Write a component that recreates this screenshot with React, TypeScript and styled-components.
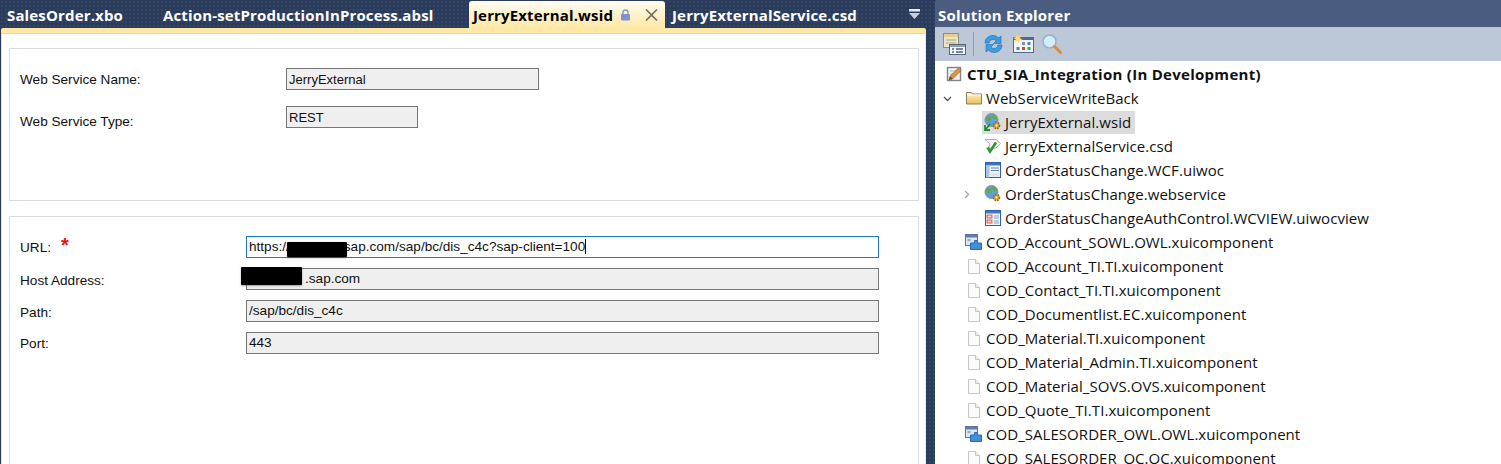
import React from "react";
import styled, { createGlobalStyle } from "styled-components";

const GlobalStyle = createGlobalStyle`
  html, body {
    margin: 0;
    padding: 0;
    background: #2b3c5a;
  }
`;

const FolderIcon = () => (
  <svg width="16" height="14" viewBox="0 0 16 14">
    <defs>
      <linearGradient id="folderFill" x1="0" y1="0" x2="0" y2="1">
        <stop offset="0" stopColor="#fff6cf" />
        <stop offset="1" stopColor="#e8bd55" />
      </linearGradient>
    </defs>
    <path d="M0.5 1.5h5l1 1.5h9v10h-15z" fill="url(#folderFill)" stroke="#85806c" />
    <path d="M1 4h14" stroke="#fffbe8" />
  </svg>
);

const PageIcon = () => (
  <svg width="12" height="15" viewBox="0 0 12 15">
    <path d="M0.5 0.5h7l4 4v10h-11z" fill="#fbfbfb" stroke="#c6c6c6" />
    <path d="M7.5 0.5v4h4" fill="#f0f0f0" stroke="#c6c6c6" />
  </svg>
);

const OwlIcon = () => (
  <svg width="17" height="16" viewBox="0 0 17 16">
    <rect x="0.5" y="0.5" width="12" height="11" fill="#dfe7f2" stroke="#5d7394" />
    <rect x="1" y="1" width="11" height="2.5" fill="#5a7fb5" />
    <rect x="2.5" y="5" width="3" height="2" fill="#8fa6c4" />
    <path d="M5.5 9h4V6.5h3V9h4v6.5h-11z" fill="#3f8fdc" stroke="#2a6cb0" />
  </svg>
);

const ListIcon = () => (
  <svg width="16" height="16" viewBox="0 0 16 16">
    <rect x="0.5" y="0.5" width="15" height="15" fill="#f3f6fb" stroke="#2f5fa8" />
    <rect x="1" y="1" width="14" height="2.5" fill="#3d78c8" />
    <rect x="1" y="3.5" width="3.5" height="12" fill="#a9c4e8" />
    <path d="M6 6h8M6 8.500h8" stroke="#5f86bc" />
    <rect x="5.5" y="11" width="9" height="3.5" fill="#dfe4ec" />
  </svg>
);

const ViewIcon = () => (
  <svg width="16" height="16" viewBox="0 0 16 16">
    <rect x="0.5" y="0.5" width="15" height="15" fill="#f7f8fb" stroke="#2f5fa8" />
    <rect x="1" y="1" width="14" height="2.5" fill="#3d78c8" />
    <rect x="2" y="5" width="5" height="3" fill="#f4d8d4" stroke="#c04030" strokeWidth="0.8" />
    <rect x="2" y="10" width="5" height="3" fill="#f4d8d4" stroke="#c04030" strokeWidth="0.8" />
    <path d="M9 6h5M9 8h5M9 11h5M9 13h5" stroke="#7f9cc4" />
  </svg>
);

const GlobeGear = ({ check }: { check?: boolean }) => (
  <svg width="17" height="18" viewBox="0 0 17 18">
    <circle cx="7.5" cy="7" r="6.5" fill="#5f9fd8" stroke="#7d94ac" />
    <path d="M2.5 4c2-1.500 3.500-.5 4.500.5s0 3.500-2 3.500-3.500-2-2.500-4zM8 1.500c2.500 0 5 1.500 5 3.500s-2.500 1-3.500 0S7 2.500 8 1.500z" fill="#64ab3e" />
    <circle cx="12.5" cy="12.5" r="3" fill="#e3a92f" stroke="#8a6a22" strokeWidth="1.6" strokeDasharray="1.6 0.9" />
    <circle cx="12.5" cy="12.5" r="1" fill="#fff3c8" />
    {check && <path d="M1 12v5h5M1.500 16.500L6 11" fill="none" stroke="#1f8f2f" strokeWidth="1.8" />}
  </svg>
);

const SchemaIcon = () => (
  <svg width="17" height="16" viewBox="0 0 17 16">
    <path d="M1 1.500h11l4.500 4-4.500 4.500H4.500l1.500-4z" fill="#f4f4f4" stroke="#aeaeae" />
    <path d="M3.500 9.500l2.500 4 6-9" fill="none" stroke="#2f9a2f" strokeWidth="2.6" />
  </svg>
);

const ProjectIcon = () => (
  <svg width="17" height="16" viewBox="0 0 17 16">
    <rect x="1.5" y="1.5" width="13" height="13" fill="#f1f3f6" stroke="#7b8794" strokeWidth="1.4" />
    <path d="M4 5h8M4 8h5" stroke="#a9b5c2" />
    <path d="M3 14l1.200-3.800L12.500 2l2.500 2.500-8.200 8.300z" fill="#e2973a" stroke="#9a5c18" strokeWidth="0.8" />
    <path d="M3 14l1.200-3.800 2.600 2.600z" fill="#7a4a18" />
  </svg>
);

const PropertiesIcon = () => (
  <svg width="23" height="24" viewBox="0 0 23 24">
    <rect x="0.5" y="1.5" width="15" height="14" fill="#ece3c6" stroke="#8d8d80" />
    <rect x="1" y="2" width="14" height="3" fill="#e6cf8c" />
    <path d="M3 8h10M3 11h10" stroke="#b5a67a" />
    <rect x="6.5" y="12.5" width="16" height="10" fill="#f4f6f9" stroke="#56657a" />
    <rect x="7" y="13" width="15" height="2" fill="#8fa0b6" />
    <path d="M9 17h2M9 20h2M13 17h7M13 20h7" stroke="#4d6180" strokeWidth="1.4" />
  </svg>
);

const RefreshIcon = () => (
  <svg width="19" height="20" viewBox="0 0 19 20">
    <path d="M1 9C1 4.500 4.500 1.500 9 1.500c2.500 0 4.500 1 5.500 2.500L17 2v7.500H9.500l2.500-2.500c-.8-1-1.800-1.500-3-1.500C6.800 5.500 5.500 7 5.200 9z" fill="#3f9ae0" stroke="#2b74b8" strokeWidth="0.7" />
    <path d="M18 11c0 4.500-3.500 7.500-8 7.500-2.500 0-4.500-1-5.500-2.500L2 18v-7.500h7.500L7 13c.8 1 1.800 1.500 3 1.500 2.200 0 3.500-1.500 3.800-3.500z" fill="#3f9ae0" stroke="#2b74b8" strokeWidth="0.7" />
  </svg>
);

const GridIcon = () => (
  <svg width="22" height="20" viewBox="0 0 22 20">
    <rect x="1.5" y="3.5" width="20" height="15" fill="#f2f4f8" stroke="#54688a" />
    <rect x="2" y="4" width="19" height="2" fill="#54688a" />
    <rect x="10" y="8" width="3" height="3" fill="#7d90ae" />
    <rect x="15.5" y="8" width="3" height="3" fill="#3f88d8" />
    <rect x="4.5" y="13" width="3" height="3" fill="#3f88d8" />
    <rect x="10" y="13" width="3" height="3" fill="#d8483a" />
    <rect x="15.5" y="13" width="3" height="3" fill="#3faa4a" />
    <path d="M5 0l1.400 2.600L9 1.500 8 4.200l2.500 1.300L7.800 6.500 7 9 5.500 7 3 8l.6-2.700L1 4l2.800-.8z" fill="#f8dc6a" />
  </svg>
);

const SearchIcon = () => (
  <svg width="20" height="20" viewBox="0 0 20 20">
    <circle cx="7.5" cy="7.5" r="6.5" fill="#d3ecfa" stroke="#9ab0c2" strokeWidth="1.5" />
    <path d="M12.500 12.500l6 6" stroke="#dd8c3c" strokeWidth="3" strokeLinecap="round" />
  </svg>
);

const LockIcon = () => (
  <svg width="11" height="12" viewBox="0 0 11 12">
    <path d="M3 5.500V3.500a2.500 2.500 0 0 1 5 0v2" fill="none" stroke="#7f93c4" strokeWidth="1.3" />
    <rect x="1" y="5" width="9" height="6.5" rx="1" fill="#7f93d4" />
  </svg>
);

const CloseIcon = () => (
  <svg width="13" height="12" viewBox="0 0 13 12">
    <path d="M1 0.500l11 11M12 0.500l-11 11" stroke="#77705a" strokeWidth="1.7" />
  </svg>
);

const OverflowIcon = () => (
  <svg width="11" height="10" viewBox="0 0 11 10">
    <rect x="0" y="0" width="11" height="2.5" fill="#e9ecf2" />
    <path d="M0 4h11L5.500 10z" fill="#c6cedb" />
  </svg>
);

const Chevron = ({ open }: { open?: boolean }) => (
  <svg width="9" height="9" viewBox="0 0 9 9">
    <path d={open ? "M1 3l3.500 3.500L8 3" : "M3 1l3.500 3.500L3 8"} fill="none" stroke={open ? "#555" : "#a6a6a6"} strokeWidth="1.3" />
  </svg>
);

const Page = styled.div`
  display: flex;
  width: 1501px;
  height: 464px;
  overflow: hidden;
  background-color: #2b3c5a;
  background-image: radial-gradient(#33466a 1px, transparent 1px);
  background-size: 4px 4px;
`;

const EditorColumn = styled.div`
  display: flex;
  flex-direction: column;
  width: 926px;
  margin-right: 9px;
  flex-shrink: 0;
`;

const TabStrip = styled.div`
  display: flex;
  align-items: flex-end;
  height: 28px;
  padding-top: 1px;
  box-sizing: border-box;
`;

const Tab = styled.div<{ $width: number; $active?: boolean }>`
  display: flex;
  align-items: center;
  box-sizing: border-box;
  height: 27px;
  width: ${(p) => p.$width}px;
  padding-left: ${(p) => (p.$active ? 4 : 7)}px;
  font-family: "Open Sans", "Noto Sans", sans-serif;
  font-weight: 700;
  font-size: 15px;
  letter-spacing: 0.15px;
  white-space: nowrap;
  color: ${(p) => (p.$active ? "#000" : "#fff")};
  border-radius: ${(p) => (p.$active ? "3px 3px 0 0" : "0")};
  background: ${(p) =>
    p.$active ? "linear-gradient(#fffdf5, #fff3cf 45%, #ffe8a6)" : "transparent"};
`;

const TabTools = styled.div`
  display: flex;
  align-items: center;
  margin-left: 7px;
`;

const CloseSlot = styled.span`
  display: flex;
  margin-left: 14px;
`;

const OverflowButton = styled.div`
  display: flex;
  margin-left: auto;
  margin-right: 6px;
  align-self: flex-start;
  padding-top: 8px;
`;

const YellowBar = styled.div`
  height: 5px;
  margin-left: 1px;
  background: #ffe8a6;
  border-radius: 2px 2px 0 0;
  flex-shrink: 0;
`;

const Document = styled.div`
  flex: 1;
  margin-left: 1px;
  padding: 14px 6px 0 7px;
  background: #fff;
  border-top: 1px solid #e0d8bc;
  border-left: 1px solid #e6e2d2;
  border-right: 1px solid #ffe8a6;
  display: flex;
  flex-direction: column;
  gap: 15px;
`;

const Group = styled.div<{ $height: number; $gap: number }>`
  box-sizing: border-box;
  height: ${(p) => p.$height}px;
  padding: 19px 0 0 10px;
  display: flex;
  flex-direction: column;
  gap: ${(p) => p.$gap}px;
  border: 1px solid #dcdcdc;
  flex-shrink: 0;
`;

const FieldRow = styled.div`
  display: flex;
  align-items: flex-start;
  height: 22px;
`;

const FieldLabel = styled.div<{ $width: number; $drop: number }>`
  display: flex;
  width: ${(p) => p.$width}px;
  padding-top: ${(p) => p.$drop}px;
  flex-shrink: 0;
  font-family: "Liberation Sans", Arial, sans-serif;
  font-size: 13.6px;
  line-height: 16px;
  color: #111;
`;

const Required = styled.span`
  margin: -5px 0 0 10px;
  color: #f01010;
  font-size: 20px;
  font-weight: 700;
  line-height: 20px;
`;

const FieldValue = styled.div<{ $width: number; $focused?: boolean; $compact?: boolean }>`
  position: relative;
  box-sizing: border-box;
  width: ${(p) => p.$width}px;
  height: 22px;
  padding: 0 2px;
  font-family: "Liberation Sans", Arial, sans-serif;
  font-size: ${(p) => (p.$compact ? 13 : 13.6)}px;
  line-height: ${(p) => (p.$compact ? 22 : 19)}px;
  color: #111;
  white-space: nowrap;
  background: ${(p) => (p.$focused ? "#fff" : "#efefef")};
  border: 1px solid ${(p) => (p.$focused ? "#1f78c8" : "#777")};
`;

const ValueAfterRedaction = styled.span<{ $gap: number }>`
  margin-left: ${(p) => p.$gap}px;
`;

const Caret = styled.span`
  display: inline-block;
  width: 1px;
  height: 15px;
  vertical-align: -3px;
  background: #000;
`;

const Redaction = styled.div<{ $left: number; $top: number; $width: number; $height: number }>`
  position: absolute;
  left: ${(p) => p.$left}px;
  top: ${(p) => p.$top}px;
  width: ${(p) => p.$width}px;
  height: ${(p) => p.$height}px;
  background: #000;
  border-radius: 1px;
  box-shadow: 0 1px 2px rgba(0, 0, 0, 0.35);
`;

const ExplorerColumn = styled.div`
  flex: 1;
  display: flex;
  flex-direction: column;
`;

const ExplorerTitle = styled.div`
  height: 27px;
  padding-left: 3px;
  box-sizing: border-box;
  font-family: "Open Sans", "Noto Sans", sans-serif;
  font-weight: 700;
  font-size: 15px;
  letter-spacing: 0.2px;
  line-height: 31px;
  color: #fff;
  background: #4a5d80;
  border-radius: 2px 0 0 0;
`;

const Toolbar = styled.div`
  display: flex;
  align-items: center;
  height: 34px;
  padding-left: 8px;
  background: #bcc7d8;
  flex-shrink: 0;
`;

const ToolButton = styled.span<{ $gap: number }>`
  display: flex;
  margin-right: ${(p) => p.$gap}px;
`;

const ToolDivider = styled.span`
  width: 1px;
  height: 24px;
  margin-right: 10px;
  background: #8f9cb0;
`;

const Tree = styled.div`
  flex: 1;
  padding-top: 1px;
  background: #fff;
  font-family: "Open Sans", "Noto Sans", sans-serif;
  font-size: 15px;
  letter-spacing: 0.05px;
  color: #111;
`;

const TreeRow = styled.div<{ $indent: number }>`
  display: flex;
  align-items: center;
  height: 24px;
  padding-left: ${(p) => p.$indent}px;
  white-space: nowrap;
`;

const SelectedItem = styled.div`
  display: flex;
  align-items: center;
  height: 23px;
  padding: 0 4px 0 2px;
  background: #dcdcdc;
`;

const ChevronSlot = styled.span`
  display: flex;
  justify-content: center;
  width: 12px;
  margin-right: 12px;
`;

const IconSlot = styled.span`
  display: flex;
  align-items: center;
  justify-content: center;
  width: 17px;
  margin-right: 4px;
`;

const RowLabel = styled.span<{ $bold?: boolean }>`
  font-weight: ${(p) => (p.$bold ? 700 : 400)};
  letter-spacing: ${(p) => (p.$bold ? "0.28px" : "inherit")};
  line-height: 22px;
`;

const components: { name: string; icon: React.ReactNode }[] = [
  { name: "COD_Account_SOWL.OWL.xuicomponent", icon: <OwlIcon /> },
  { name: "COD_Account_TI.TI.xuicomponent", icon: <PageIcon /> },
  { name: "COD_Contact_TI.TI.xuicomponent", icon: <PageIcon /> },
  { name: "COD_Documentlist.EC.xuicomponent", icon: <PageIcon /> },
  { name: "COD_Material.TI.xuicomponent", icon: <PageIcon /> },
  { name: "COD_Material_Admin.TI.xuicomponent", icon: <PageIcon /> },
  { name: "COD_Material_SOVS.OVS.xuicomponent", icon: <PageIcon /> },
  { name: "COD_Quote_TI.TI.xuicomponent", icon: <PageIcon /> },
  { name: "COD_SALESORDER_OWL.OWL.xuicomponent", icon: <OwlIcon /> },
  { name: "COD_SALESORDER_QC.QC.xuicomponent", icon: <PageIcon /> },
];

const App = () => {
  return (
    <Page>
      <GlobalStyle />
      <EditorColumn>
        <TabStrip>
          <Tab $width={156}>SalesOrder.xbo</Tab>
          <Tab $width={313}>Action-setProductionInProcess.absl</Tab>
          <Tab $width={196} $active>
            JerryExternal.wsid
            <TabTools>
              <LockIcon />
              <CloseSlot>
                <CloseIcon />
              </CloseSlot>
            </TabTools>
          </Tab>
          <Tab $width={210}>JerryExternalService.csd</Tab>
          <OverflowButton>
            <OverflowIcon />
          </OverflowButton>
        </TabStrip>
        <YellowBar />
        <Document>
          <Group $height={153} $gap={16}>
            <FieldRow>
              <FieldLabel $width={266} $drop={4}>Web Service Name:</FieldLabel>
              <FieldValue $width={253} $compact>JerryExternal</FieldValue>
            </FieldRow>
            <FieldRow>
              <FieldLabel $width={266} $drop={8}>Web Service Type:</FieldLabel>
              <FieldValue $width={132} $compact>REST</FieldValue>
            </FieldRow>
          </Group>
          <Group $height={260} $gap={10}>
            <FieldRow>
              <FieldLabel $width={226} $drop={4}>
                URL:
                <Required>*</Required>
              </FieldLabel>
              <FieldValue $width={633} $focused>
                https://
                <Redaction $left={40} $top={5} $width={60} $height={15} />
                <ValueAfterRedaction $gap={54}>sap.com/sap/bc/dis_c4c?sap-client=100</ValueAfterRedaction>
                <Caret />
              </FieldValue>
            </FieldRow>
            <FieldRow>
              <FieldLabel $width={226} $drop={5}>Host Address:</FieldLabel>
              <FieldValue $width={633}>
                <ValueAfterRedaction $gap={56}>.sap.com</ValueAfterRedaction>
                <Redaction $left={-6} $top={-2} $width={61} $height={18} />
              </FieldValue>
            </FieldRow>
            <FieldRow>
              <FieldLabel $width={226} $drop={5}>Path:</FieldLabel>
              <FieldValue $width={633}>/sap/bc/dis_c4c</FieldValue>
            </FieldRow>
            <FieldRow>
              <FieldLabel $width={226} $drop={4}>Port:</FieldLabel>
              <FieldValue $width={633}>443</FieldValue>
            </FieldRow>
          </Group>
        </Document>
      </EditorColumn>
      <ExplorerColumn>
        <ExplorerTitle>Solution Explorer</ExplorerTitle>
        <Toolbar>
          <ToolButton $gap={7}><PropertiesIcon /></ToolButton>
          <ToolDivider />
          <ToolButton $gap={9}><RefreshIcon /></ToolButton>
          <ToolButton $gap={8}><GridIcon /></ToolButton>
          <ToolButton $gap={0}><SearchIcon /></ToolButton>
        </Toolbar>
        <Tree>
          <TreeRow $indent={11}>
            <IconSlot><ProjectIcon /></IconSlot>
            <RowLabel $bold>CTU_SIA_Integration (In Development)</RowLabel>
          </TreeRow>
          <TreeRow $indent={6}>
            <ChevronSlot><Chevron open /></ChevronSlot>
            <IconSlot><FolderIcon /></IconSlot>
            <RowLabel>WebServiceWriteBack</RowLabel>
          </TreeRow>
          <TreeRow $indent={47}>
            <SelectedItem>
              <IconSlot><GlobeGear check /></IconSlot>
              <RowLabel>JerryExternal.wsid</RowLabel>
            </SelectedItem>
          </TreeRow>
          <TreeRow $indent={49}>
            <IconSlot><SchemaIcon /></IconSlot>
            <RowLabel>JerryExternalService.csd</RowLabel>
          </TreeRow>
          <TreeRow $indent={49}>
            <IconSlot><ListIcon /></IconSlot>
            <RowLabel>OrderStatusChange.WCF.uiwoc</RowLabel>
          </TreeRow>
          <TreeRow $indent={25}>
            <ChevronSlot><Chevron /></ChevronSlot>
            <IconSlot><GlobeGear /></IconSlot>
            <RowLabel>OrderStatusChange.webservice</RowLabel>
          </TreeRow>
          <TreeRow $indent={49}>
            <IconSlot><ViewIcon /></IconSlot>
            <RowLabel>OrderStatusChangeAuthControl.WCVIEW.uiwocview</RowLabel>
          </TreeRow>
          {components.map((c) => (
            <TreeRow $indent={30} key={c.name}>
              <IconSlot>{c.icon}</IconSlot>
              <RowLabel>{c.name}</RowLabel>
            </TreeRow>
          ))}
        </Tree>
      </ExplorerColumn>
    </Page>
  );
};

export default App;
